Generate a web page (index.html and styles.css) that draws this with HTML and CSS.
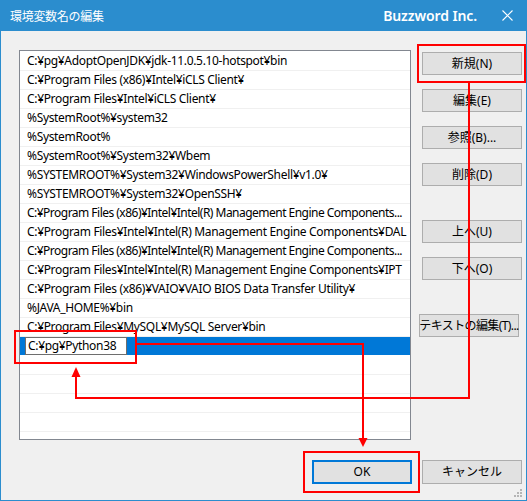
FILE: index.html
```html
<!DOCTYPE html>
<html lang="ja">
<head>
<meta charset="utf-8">
<title>環境変数名の編集</title>
<link rel="stylesheet" href="styles.css">
</head>
<body>
<div class="window">
  <div class="titlebar">
    <span class="title">環境変数名の編集</span>
    <span class="brand">Buzzword Inc.</span>
    <svg class="close" width="11" height="11" viewBox="0 0 11 11"><path d="M0.5 0.5 L10.5 10.5 M10.5 0.5 L0.5 10.5" stroke="#fff" stroke-width="1.1" fill="none"/></svg>
  </div>
  <div class="content">
    <div class="main">
      <div class="list">
        <div class="row">C:¥pg¥AdoptOpenJDK¥jdk-11.0.5.10-hotspot¥bin</div>
        <div class="row">C:¥Program Files (x86)¥Intel¥iCLS Client¥</div>
        <div class="row">C:¥Program Files¥Intel¥iCLS Client¥</div>
        <div class="row">%SystemRoot%¥system32</div>
        <div class="row">%SystemRoot%</div>
        <div class="row">%SystemRoot%¥System32¥Wbem</div>
        <div class="row">%SYSTEMROOT%¥System32¥WindowsPowerShell¥v1.0¥</div>
        <div class="row">%SYSTEMROOT%¥System32¥OpenSSH¥</div>
        <div class="row tight">C:¥Program Files (x86)¥Intel¥Intel(R) Management Engine Components...</div>
        <div class="row">C:¥Program Files¥Intel¥Intel(R) Management Engine Components¥DAL</div>
        <div class="row tight">C:¥Program Files (x86)¥Intel¥Intel(R) Management Engine Components...</div>
        <div class="row">C:¥Program Files¥Intel¥Intel(R) Management Engine Components¥IPT</div>
        <div class="row">C:¥Program Files (x86)¥VAIO¥VAIO BIOS Data Transfer Utility¥</div>
        <div class="row">%JAVA_HOME%¥bin</div>
        <div class="row">C:¥Program Files¥MySQL¥MySQL Server¥bin</div>
        <div class="row selected"><span class="edit">C:¥pg¥Python38</span></div>
        <div class="row"></div>
        <div class="row"></div>
        <div class="row"></div>
        <div class="row"></div>
      </div>
      <div class="side">
        <div class="btn">新規(N)</div>
        <div class="btn">編集(E)</div>
        <div class="btn">参照(B)...</div>
        <div class="btn">削除(D)</div>
        <div class="btn group">上へ(U)</div>
        <div class="btn">下へ(O)</div>
        <div class="btn group shifted">テキストの編集(T)...</div>
      </div>
    </div>
    <div class="footer">
      <div class="btn big default">OK</div>
      <div class="btn big">キャンセル</div>
    </div>
  </div>
</div>
<svg class="annot" width="527" height="501" viewBox="0 0 527 501">
  <g fill="none" stroke="#ff0000" stroke-width="2">
    <rect x="418" y="45" width="107" height="37"/>
    <rect x="15" y="331" width="121" height="32"/>
    <rect x="304" y="452" width="115" height="40"/>
    <path d="M469 83 V398 H76 V375"/>
    <path d="M136 344 H363 V440"/>
  </g>
  <g fill="#ff0000">
    <polygon points="76,367 71.5,377 80.5,377"/>
    <polygon points="363,447 358.5,438 367.5,438"/>
  </g>
  <g fill="#b5b5b5">
    <rect x="520" y="489" width="2" height="2"/>
    <rect x="517" y="492" width="2" height="2"/>
    <rect x="520" y="492" width="2" height="2"/>
    <rect x="514" y="495" width="2" height="2"/>
    <rect x="517" y="495" width="2" height="2"/>
    <rect x="520" y="495" width="2" height="2"/>
  </g>
</svg>
</body>
</html>
```

FILE: styles.css
```css
html, body {
  margin: 0;
  padding: 0;
  background: #f0f0f0;
}

body {
  font-family: "Noto Sans", "Noto Sans CJK JP", sans-serif;
  font-size: 12px;
  color: #000;
  position: relative;
  width: 527px;
  height: 501px;
  overflow: hidden;
}

.window {
  width: 527px;
  height: 501px;
  box-sizing: border-box;
  border: 1px solid #2b8dce;
  border-top: 0;
  background: #f0f0f0;
  display: flex;
  flex-direction: column;
}

.titlebar {
  height: 31px;
  margin: 0 -1px;
  background: #2b8dce;
  display: flex;
  align-items: center;
  padding: 0 14px 0 10px;
  color: #fff;
  flex: none;
}

.title {
  font-family: "Noto Sans CJK JP", sans-serif;
  font-size: 12px;
  letter-spacing: -0.3px;
}

.brand {
  margin-left: auto;
  font-family: "Noto Sans", sans-serif;
  font-size: 14px;
  font-weight: 600;
  margin-right: 25px;
  letter-spacing: -0.1px;
}

.close {
  display: block;
}

.content {
  padding: 19px 4px 0 18px;
  flex: 1;
}

.main {
  display: flex;
  align-items: flex-start;
}

.list {
  width: 392px;
  height: 390px;
  box-sizing: border-box;
  border: 1px solid #828790;
  background: #fff;
  padding-top: 1px;
  overflow: hidden;
  flex: none;
}

.row {
  height: 18px;
  line-height: 18px;
  border-bottom: 1px solid #f0f0f0;
  padding-left: 7px;
  white-space: nowrap;
  overflow: hidden;
  letter-spacing: -0.33px;
}

.row.tight {
  letter-spacing: -0.52px;
}

.row.selected {
  background: #0078d7;
  padding-left: 5px;
  border-bottom-color: #fff;
}

.edit {
  display: block;
  width: 102px;
  height: 18px;
  box-sizing: border-box;
  border: 1px solid #6e6e6e;
  background: #fff;
  padding-left: 2px;
  line-height: 16px;
}

.side {
  margin-left: 11px;
  padding-top: 2px;
  display: flex;
  flex-direction: column;
  gap: 14px;
  width: 100px;
  flex: none;
}

.btn {
  width: 100px;
  height: 23px;
  box-sizing: border-box;
  background: #e1e1e1;
  border: 1px solid #adadad;
  display: flex;
  align-items: center;
  justify-content: center;
  white-space: nowrap;
  line-height: 1;
}

.btn.group {
  margin-top: 20px;
}

.btn.shifted {
  margin-left: -3px;
  letter-spacing: -0.6px;
}

.footer {
  display: flex;
  justify-content: flex-end;
  gap: 10px;
  margin-top: 20px;
}

.btn.big {
  height: 24px;
}

.btn.default {
  border: 2px solid #0078d7;
}

.annot {
  position: absolute;
  left: 0;
  top: 0;
  pointer-events: none;
}
```
